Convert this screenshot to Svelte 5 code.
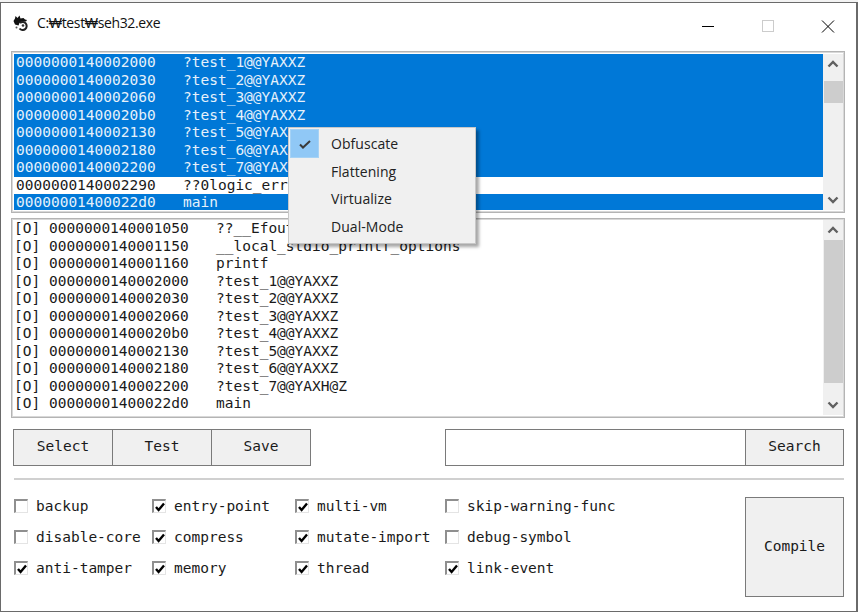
<script>
  const funcs = [
    ['0000000140002000', '?test_1@@YAXXZ', true],
    ['0000000140002030', '?test_2@@YAXXZ', true],
    ['0000000140002060', '?test_3@@YAXXZ', true],
    ['00000001400020b0', '?test_4@@YAXXZ', true],
    ['0000000140002130', '?test_5@@YAXXZ', true],
    ['0000000140002180', '?test_6@@YAXXZ', true],
    ['0000000140002200', '?test_7@@YAXXZ', true],
    ['0000000140002290', '??0logic_error@std@@QEAA@XZ', false],
    ['00000001400022d0', 'main', true]
  ]
  const logs = [
    ['0000000140001050', '??__Efout@@YAXXZ'],
    ['0000000140001150', '__local_stdio_printf_options'],
    ['0000000140001160', 'printf'],
    ['0000000140002000', '?test_1@@YAXXZ'],
    ['0000000140002030', '?test_2@@YAXXZ'],
    ['0000000140002060', '?test_3@@YAXXZ'],
    ['00000001400020b0', '?test_4@@YAXXZ'],
    ['0000000140002130', '?test_5@@YAXXZ'],
    ['0000000140002180', '?test_6@@YAXXZ'],
    ['0000000140002200', '?test_7@@YAXH@Z'],
    ['00000001400022d0', 'main']
  ]
  const columns = [
    { width: 138, items: [['backup', false], ['disable-core', false], ['anti-tamper', true]] },
    { width: 143, items: [['entry-point', true], ['compress', true], ['memory', true]] },
    { width: 150, items: [['multi-vm', true], ['mutate-import', true], ['thread', true]] },
    { width: 300, items: [['skip-warning-func', false], ['debug-symbol', false], ['link-event', true]] }
  ]
  const menu = ['Obfuscate', 'Flattening', 'Virtualize', 'Dual-Mode']
</script>

{#snippet scrollbar(thumbH, thumbTop)}
  <div class="scrollbar">
    <div class="arrow">
      <svg width="12" height="8" viewBox="0 0 12 8"><path d="M1.5 6.5 6 2l4.5 4.5" fill="none" stroke="#606060" stroke-width="2.4" /></svg>
    </div>
    <div class="track">
      <div class="thumb" style="height:{thumbH}px;margin-top:{thumbTop}px"></div>
    </div>
    <div class="arrow">
      <svg width="12" height="8" viewBox="0 0 12 8"><path d="M1.5 1.5 6 6l4.5-4.5" fill="none" stroke="#606060" stroke-width="2.4" /></svg>
    </div>
  </div>
{/snippet}

<div class="window">
  <div class="titlebar">
    <svg class="app-icon" width="16" height="16" viewBox="0 0 16 16">
      <path d="M0.5 6 2 3.5 2.5 1 4.5 3 6.5 0.5 7.5 3.5 10.5 3 12 4.5 14 5 13 6.5 9 6.5 6.5 8 5.5 10.5 2 9.5z" fill="#111" />
      <path d="M6.5 13.5A4 4 0 1 0 7 8" fill="none" stroke="#222" stroke-width="2" />
      <circle cx="10" cy="10.5" r="1.3" fill="#333" />
      <circle cx="3.5" cy="12.5" r="1" fill="#555" />
    </svg>
    <span class="title">C:₩test₩seh32.exe</span>
    <div class="controls">
      <svg class="ctl" width="46" height="30" viewBox="0 0 46 30"><path d="M17 21.5h12" stroke="#000" stroke-width="1" /></svg>
      <svg class="ctl" width="46" height="30" viewBox="0 0 46 30"><rect x="17.5" y="15.5" width="11" height="11" fill="none" stroke="#ccc" /></svg>
      <svg class="ctl" width="46" height="30" viewBox="0 0 46 30"><path d="M17 15.5l12 12M29 15.5l-12 12" stroke="#000" stroke-width="1" /></svg>
    </div>
  </div>

  <div class="content">
    <div class="listbox top">
      <div class="rows">
        {#each funcs as [addr, name, sel]}
          <div class="row" class:sel><span class="addr">{addr}</span><span>{name}</span></div>
        {/each}
      </div>
      {@render scrollbar(22, 7)}
    </div>

    <div class="listbox log">
      <div class="rows">
        {#each logs as [addr, name]}
          <div class="row"><span class="tag">[O]</span><span class="addr">{addr}</span><span>{name}</span></div>
        {/each}
      </div>
      {@render scrollbar(143, 0)}
    </div>

    <div class="actions">
      <div class="btn-group">
        <button>Select</button>
        <button>Test</button>
        <button>Save</button>
      </div>
      <div class="search">
        <input type="text" />
        <button>Search</button>
      </div>
    </div>

    <div class="rule"></div>

    <div class="options">
      {#each columns as col}
        <div class="opt-col" style="width:{col.width}px">
          {#each col.items as [label, on]}
            <div class="opt">
              <span class="box">
                {#if on}
                  <svg width="12" height="12" viewBox="0 0 12 12"><path d="M2 6 4.6 9 10 2.5" fill="none" stroke="#000" stroke-width="2.4" /></svg>
                {/if}
              </span>
              <span>{label}</span>
            </div>
          {/each}
        </div>
      {/each}
      <button class="compile">Compile</button>
    </div>
  </div>

  <div class="menu">
    {#each menu as item, i}
      <div class="menu-item">
        <span class="check" class:on={i === 0}>
          {#if i === 0}
            <svg width="14" height="12" viewBox="0 0 14 12"><path d="M2 6.5 5 9.5 12 3" fill="none" stroke="#3a3a3a" stroke-width="2" /></svg>
          {/if}
        </span>
        <span>{item}</span>
      </div>
    {/each}
  </div>
</div>

<style>
  :global(body) {
    background: #f3f3f3;
    overflow: hidden;
  }
  .window {
    position: relative;
    width: 855px;
    height: 608px;
    margin-top: 2px;
    background: #fff;
    border: 1px solid #6a6a6a;
    border-right-width: 2px;
    font-family: 'DejaVu Sans Mono', monospace;
    font-size: 14.5px;
    color: #1a1a1a;
    box-sizing: content-box;
  }
  .titlebar {
    display: flex;
    align-items: center;
    height: 38px;
    padding-left: 12px;
  }
  .app-icon {
    margin-right: 8px;
    margin-top: 2px;
  }
  .title {
    font-family: 'Open Sans', sans-serif;
    font-size: 14px;
    letter-spacing: -0.35px;
    color: #111;
  }
  .controls {
    margin-left: auto;
    margin-top: -4px;
    display: flex;
    gap: 14px;
    margin-right: 5px;
  }
  .content {
    padding: 10px 11px 0 10px;
  }
  .listbox {
    display: flex;
    border: 1px solid #b4b4b4;
    outline: 1px solid #d8d8d8;
    outline-offset: -2px;
    padding: 2px 1px 2px 2px;
    width: 834px;
    box-sizing: border-box;
  }
  .top {
    height: 162px;
  }
  .log {
    height: 200px;
    margin-top: 5px;
    padding-top: 1px;
  }
  .rows {
    flex: 1;
    line-height: 17.5px;
    overflow: hidden;
    white-space: pre;
  }
  .row {
    display: flex;
    height: 17.5px;
    padding-left: 2px;
  }
  .log .row {
    padding-left: 0;
  }
  .row.sel {
    background: #0078d7;
    color: #e6f1fb;
  }
  .addr {
    width: 167px;
  }
  .tag {
    width: 35px;
  }
  .scrollbar {
    width: 20px;
    background: #f0f0f0;
    display: flex;
    flex-direction: column;
  }
  .arrow {
    height: 20px;
    flex: none;
    display: flex;
    align-items: center;
    justify-content: center;
  }
  .track {
    flex: 1;
  }
  .thumb {
    background: #cdcdcd;
    width: 19px;
    margin-left: 1px;
  }
  button {
    font-family: 'DejaVu Sans Mono', monospace;
    font-size: 14.5px;
    color: #1a1a1a;
    background: #f0f0f0;
    border: 1px solid #7a7a7a;
    border-radius: 0;
    padding: 0;
    margin: 0;
    box-sizing: border-box;
  }
  .actions {
    display: flex;
    justify-content: space-between;
    margin-top: 11px;
    padding-left: 2px;
    width: 833px;
    box-sizing: border-box;
  }
  .btn-group {
    display: flex;
  }
  .btn-group button {
    width: 100px;
    height: 37px;
    margin-right: -1px;
    padding-bottom: 3px;
  }
  .search {
    display: flex;
  }
  .search input {
    width: 300px;
    height: 37px;
    box-sizing: border-box;
    border: 1px solid #7a7a7a;
    border-right: none;
    background: #fff;
    margin: 0;
    padding: 0;
  }
  .search button {
    width: 99px;
    height: 37px;
    padding-bottom: 3px;
  }
  .rule {
    height: 2px;
    background: #d0d0d0;
    margin-top: 12px;
    margin-left: 3px;
    width: 830px;
  }
  .options {
    display: flex;
    margin-top: 17px;
    padding-left: 3px;
    width: 833px;
    box-sizing: border-box;
  }
  .opt-col {
    display: flex;
    flex-direction: column;
    gap: 13px;
  }
  .opt {
    display: flex;
    align-items: center;
    gap: 8px;
    height: 18px;
    white-space: pre;
  }
  .box {
    width: 14px;
    height: 14px;
    box-sizing: border-box;
    border: 2px solid #8f8f8f;
    border-right: 1px solid #e4e4e4;
    border-bottom: 1px solid #e4e4e4;
    display: flex;
    align-items: center;
    justify-content: center;
    flex: none;
  }
  .box svg {
    flex: none;
  }
  .compile {
    margin-left: auto;
    width: 99px;
    height: 100px;
    padding-bottom: 2px;
  }
  .menu {
    position: absolute;
    left: 287px;
    top: 124px;
    width: 188px;
    height: 117px;
    box-sizing: border-box;
    background: #f0f0f0;
    border: 1px solid #c8c8c8;
    box-shadow: 3px 3px 3px rgba(0, 0, 0, 0.35);
    padding: 2px 0;
    font-family: 'Open Sans', sans-serif;
    font-size: 14px;
    letter-spacing: 0.05px;
    color: #222;
  }
  .menu-item {
    display: flex;
    align-items: center;
    height: 27.5px;
  }
  .check {
    width: 27px;
    height: 27px;
    margin-left: 2px;
    margin-right: 13px;
    display: flex;
    align-items: center;
    justify-content: center;
    flex: none;
  }
  .check.on {
    background: #90c8f6;
    box-shadow: 0 0 0 1px #a6d2f5;
  }
</style>
